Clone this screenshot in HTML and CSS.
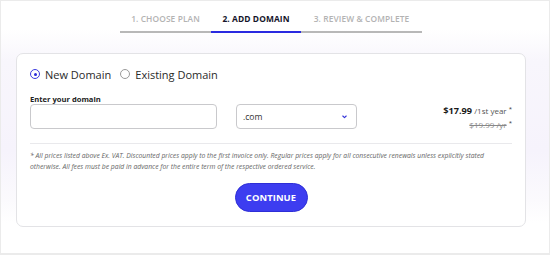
FILE: index.html
```html
<!DOCTYPE html>
<html>
<head>
<meta charset="utf-8">
<link rel="stylesheet" href="styles.css">
</head>
<body>
<div class="page">
  <nav class="steps">
    <div class="step step-1">1. CHOOSE PLAN</div>
    <div class="step step-2 active">2. ADD DOMAIN</div>
    <div class="step step-3">3. REVIEW &amp; COMPLETE</div>
  </nav>
  <section class="card">
    <div class="radios">
      <label class="radio checked"><span class="dot"></span>New Domain</label>
      <label class="radio"><span class="dot"></span>Existing Domain</label>
    </div>
    <div class="field-label">Enter your domain</div>
    <div class="domain-row">
      <div class="input"></div>
      <div class="select"><span>.com</span>
        <svg class="chev" width="5" height="4" viewBox="0 0 5 4"><path d="M0.8 1 L2.5 2.7 L4.2 1" fill="none" stroke="#3434d8" stroke-width="1.1" stroke-linecap="round" stroke-linejoin="round"/></svg>
      </div>
      <div class="price">
        <div class="now"><b>$17.99</b> /1st year <sup>*</sup></div>
        <div class="old"><s>$19.99 /yr</s> <sup>*</sup></div>
      </div>
    </div>
    <div class="divider"></div>
    <p class="note">* All prices listed above Ex. VAT. Discounted prices apply to the first invoice only. Regular prices apply for all consecutive renewals unless explicitly stated otherwise. All fees must be paid in advance for the entire term of the respective ordered service.</p>
    <div class="actions"><button class="btn">CONTINUE</button></div>
  </section>
</div>
</body>
</html>
```
FILE: styles.css
```css
* { box-sizing: border-box; }
html, body { margin: 0; padding: 0; }
body {
  width: 550px;
  height: 255px;
  overflow: hidden;
  font-family: "Open Sans", "Liberation Sans", sans-serif;
  color: #222;
}
.page {
  width: 550px;
  height: 255px;
  border: 1px solid #ebebeb;
  border-bottom-width: 2px;
  background: linear-gradient(180deg, #ffffff 0px, #ffffff 28px, #f8f6fc 60px, #f6f3fc 150px, #fbfafd 200px, #ffffff 222px);
  padding-top: 12px;
}
.steps {
  display: flex;
  margin-left: 119px;
  width: 302px;
}
.step {
  text-align: center;
  font-size: 8.4px;
  font-weight: 600;
  letter-spacing: 0.1px;
  color: #b3b3b3;
  line-height: 12px;
  padding-bottom: 6px;
  border-bottom: 2px solid #b8b8b8;
}
.step-1 { width: 91px; }
.step-2 { width: 90px; }
.step-3 { width: 121px; }
.step.active { color: #15152a; font-weight: 700; border-bottom-color: #2a2ae0; }
.card {
  margin: 20px 0 0 15px;
  width: 510px;
  height: 174px;
  background: #fff;
  border: 1px solid #e3e3e6;
  border-radius: 7px;
  padding: 13px 13px 0 13px;
}
.radios { display: flex; gap: 9px; align-items: center; height: 14px; }
.radio { display: flex; align-items: center; gap: 5px; font-size: 11px; color: #2a2a2a; }
.dot {
  width: 10px; height: 10px; border-radius: 50%;
  border: 1px solid #9a9a9a; position: relative; flex: none;
}
.radio.checked .dot { border-color: #3b3be0; }
.radio.checked .dot::after {
  content: ""; position: absolute; left: 2.5px; top: 2.5px;
  width: 3px; height: 3px; border-radius: 50%; background: #2b2bd8;
}
.field-label { margin-top: 14px; font-size: 7.6px; font-weight: 700; color: #222; line-height: 9px; }
.domain-row { display: flex; align-items: flex-start; margin-top: 0; }
.input {
  width: 187px; height: 25px; border: 1px solid #c9c9cc; border-radius: 4px; background: #fff;
}
.select {
  margin-left: 19px; width: 121px; height: 25px; border: 1px solid #c9c9cc; border-radius: 4px;
  display: flex; align-items: center; justify-content: space-between; padding: 0 9px 0 6px;
  font-size: 8.6px; color: #333;
}
.price { margin-left: auto; margin-top: -1px; text-align: right; font-size: 8px; color: #555; line-height: 13px; }
.price b { color: #1a1a1a; font-size: 9.2px; }
.price sup { font-size: 6px; vertical-align: 3px; color: #333; }
.price .old { color: #888; }
.divider { margin-top: 12px; height: 1px; background: #e9e9ec; }
.note {
  margin: 7px 0 0; font-size: 6.8px; line-height: 10.6px; font-style: italic; color: #666;
}
.actions { display: flex; justify-content: center; margin-top: 11px; }
.btn {
  width: 73px; height: 29px; border-radius: 15px; border: 1px solid #2e2ed6;
  background: #3d3df0; color: #fff; font-family: inherit; font-size: 9.4px; font-weight: 700;
  letter-spacing: 0.1px; padding: 0;
}
```
